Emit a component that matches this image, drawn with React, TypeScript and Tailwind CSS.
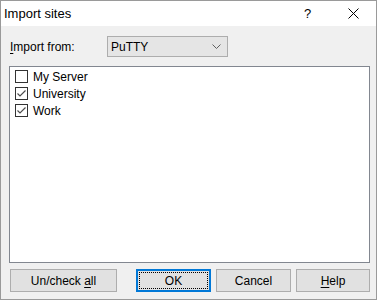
import React from "react";

const items = [
  { name: "My Server", checked: false },
  { name: "University", checked: true },
  { name: "Work", checked: true },
];

function CheckBox({ checked }: { checked: boolean }) {
  return (
    <div className="w-[13px] h-[13px] border border-[#333333] bg-white flex items-center justify-center shrink-0">
      {checked && (
        <svg width="11" height="11" viewBox="0 0 11 11">
          <path d="M1.5 5.5 L4 8 L9.5 2.5" fill="none" stroke="#4d4d4d" strokeWidth="1.2" />
        </svg>
      )}
    </div>
  );
}

function Button({ children, width, focused }: { children: React.ReactNode; width: string; focused?: boolean }) {
  if (focused) {
    return (
      <div className={`${width} h-[23px] border-2 border-[#0078d7] bg-[#e1e1e1] p-px`}>
        <div className="w-full h-full border border-dotted border-black flex items-center justify-center">
          {children}
        </div>
      </div>
    );
  }
  return (
    <div className={`${width} h-[23px] border border-[#adadad] bg-[#e1e1e1] flex items-center justify-center`}>
      {children}
    </div>
  );
}

export default function App() {
  return (
    <div
      className="w-[377px] h-[300px] border border-[#9a9a9a] bg-[#f0f0f0] flex flex-col text-[12px] text-black"
      style={{ fontFamily: '"Liberation Sans", Arial, sans-serif' }}
    >
      {/* Title bar */}
      <div className="h-[25px] bg-white flex items-center shrink-0">
        <div className="pl-[3px] flex-1 text-[13px]">Import sites</div>
        <div className="w-[46px] text-center text-[13px] mr-[1px] pl-[3px]">?</div>
        <div className="w-[46px] flex items-center justify-center">
          <svg width="11" height="11" viewBox="0 0 11 11">
            <path d="M0.5 0.5 L10.5 10.5 M10.5 0.5 L0.5 10.5" stroke="#000" strokeWidth="1" />
          </svg>
        </div>
      </div>

      {/* Body */}
      <div className="flex flex-col pt-[10px] pl-[8px]">
        <div className="flex items-center h-[21px]">
          <div className="w-[98px] pl-px">
            <span className="underline underline-offset-2">I</span>mport from:
          </div>
          <div className="w-[121px] h-[21px] border border-[#adadad] bg-[#e5e5e5] flex items-center pl-[3px] pr-[6px]">
            <span className="flex-1">PuTTY</span>
            <svg width="9" height="5" viewBox="0 0 9 5">
              <path d="M0.5 0.5 L4.5 4.5 L8.5 0.5" fill="none" stroke="#606060" strokeWidth="1" />
            </svg>
          </div>
        </div>

        {/* List */}
        <div className="mt-[9px] w-[361px] h-[197px] border border-[#828790] bg-white pt-px pl-[5px] flex flex-col">
          {items.map((item) => (
            <div key={item.name} className="h-[17px] flex items-center gap-[5px]">
              <CheckBox checked={item.checked} />
              <span>{item.name}</span>
            </div>
          ))}
        </div>

        {/* Buttons */}
        <div className="mt-[6px] flex pl-px">
          <Button width="w-[107px]">
            <span>
              Un/check <span className="underline underline-offset-2">a</span>ll
            </span>
          </Button>
          <div className="ml-[19px]">
            <Button width="w-[75px]" focused>
              OK
            </Button>
          </div>
          <div className="ml-[5px]">
            <Button width="w-[75px]">Cancel</Button>
          </div>
          <div className="ml-[5px]">
            <Button width="w-[74px]">
              <span>
                <span className="underline underline-offset-2">H</span>elp
              </span>
            </Button>
          </div>
        </div>
      </div>
    </div>
  );
}
